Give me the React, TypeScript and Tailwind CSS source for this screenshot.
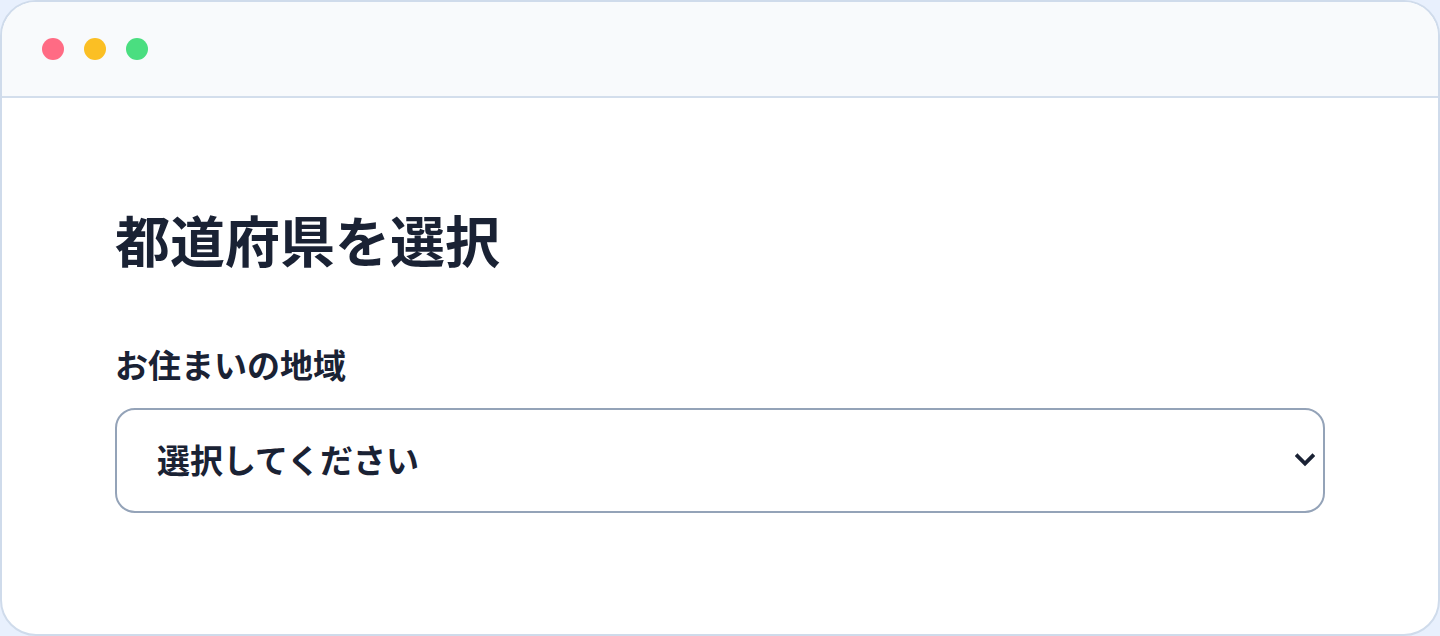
import React from "react";

export default function App() {
  return (
    <div className="w-[1440px] h-[636px] bg-[#e8f0fd] overflow-hidden" style={{ fontFamily: '"Noto Sans CJK JP", "Noto Sans", sans-serif' }}>
      <div className="w-full h-full flex flex-col bg-white border-2 border-[#cfdbeb] rounded-[36px] overflow-hidden">
        <div className="h-[96px] shrink-0 bg-[#f8fafc] border-b-2 border-[#d3deec] flex items-center pl-[40px] gap-[20px]">
          <span className="w-[22px] h-[22px] rounded-full bg-[#ff6b84]" />
          <span className="w-[22px] h-[22px] rounded-full bg-[#fbbf24]" />
          <span className="w-[22px] h-[22px] rounded-full bg-[#4ade80]" />
        </div>
        <div className="flex-1 flex flex-col pl-[113px] pr-[113px] pt-[107px] text-[#1a2234]">
          <h1 className="text-[55px] leading-[1.2] font-bold mb-[74px]">都道府県を選択</h1>
          <label className="text-[33px] leading-[1.2] font-bold mb-[23px]">お住まいの地域</label>
          <div className="h-[105px] w-full border-2 border-[#94a3b8] rounded-[20px] flex items-center justify-between pl-[40px] pr-[8px]">
            <span className="text-[33px] leading-[1.2] font-bold">選択してください</span>
            <svg width="20" height="14" viewBox="0 0 20 14" fill="none">
              <path d="M2.5 3 L10 10.5 L17.5 3" stroke="#1a2234" strokeWidth="3.8" strokeLinecap="square" strokeLinejoin="miter" />
            </svg>
          </div>
        </div>
      </div>
    </div>
  );
}
